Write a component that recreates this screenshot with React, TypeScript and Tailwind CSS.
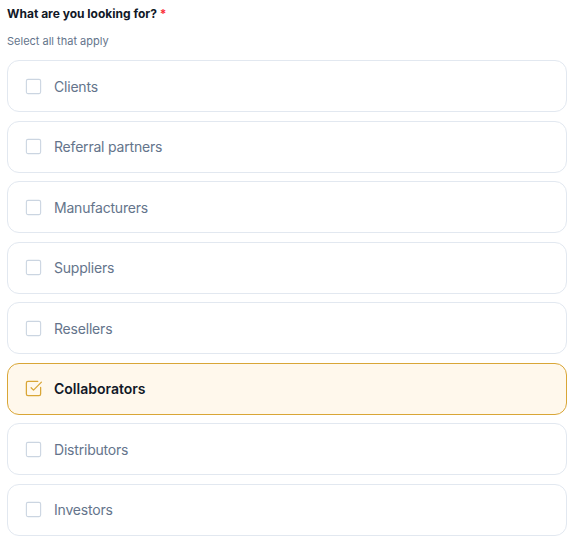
import { useState } from "react";
import { Square, SquareCheckBig } from "lucide-react";

const options = [
  "Clients",
  "Referral partners",
  "Manufacturers",
  "Suppliers",
  "Resellers",
  "Collaborators",
  "Distributors",
  "Investors",
];

export default function App() {
  const [selected, setSelected] = useState<string[]>(["Collaborators"]);

  const toggle = (o: string) => {
    setSelected((s) => (s.includes(o) ? s.filter((x) => x !== o) : [...s, o]));
  };

  return (
    <div
      className="bg-white px-[7px] pt-[5px] w-[571px]"
      style={{ fontFamily: "Inter, 'Noto Sans', sans-serif" }}
    >
      <h2 className="text-[12px] leading-[18px] font-bold text-[#111827]">
        What are you looking for? <span className="text-red-500">*</span>
      </h2>
      <p className="mt-[11px] text-[11px] leading-[14px] text-[#64748b]">
        Select all that apply
      </p>
      <div className="mt-[12px] flex flex-col gap-[8.5px]">
        {options.map((o) => {
          const on = selected.includes(o);
          return (
            <button
              key={o}
              type="button"
              onClick={() => toggle(o)}
              className={`flex h-[52px] w-[560px] items-center gap-[11px] rounded-[12px] border px-[16px] text-left ${
                on
                  ? "border-[#d9a636] bg-[#fff8ec]"
                  : "border-[#e2e8f0] bg-white"
              }`}
            >
              {on ? (
                <SquareCheckBig size={19} strokeWidth={1.6} className="text-[#d9a636]" />
              ) : (
                <Square size={19} strokeWidth={1.4} className="text-[#cbd5e1]" />
              )}
              <span
                className={`text-[14px] ${
                  on
                    ? "font-semibold text-[#111827]"
                    : "tracking-[-0.2px] text-[#64748b]"
                }`}
              >
                {o}
              </span>
            </button>
          );
        })}
      </div>
    </div>
  );
}
